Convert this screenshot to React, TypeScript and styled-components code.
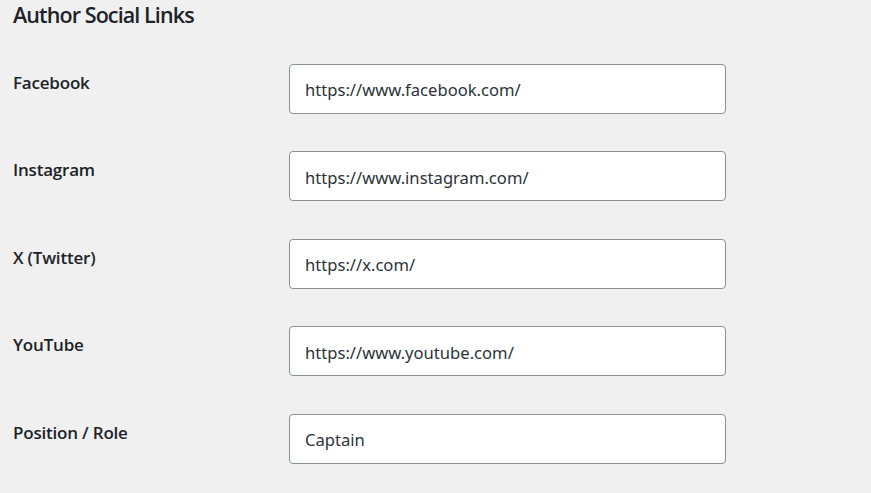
import React from "react";
import styled, { createGlobalStyle } from "styled-components";

const GlobalStyle = createGlobalStyle`
  html, body {
    margin: 0;
    padding: 0;
    background: #f0f0f1;
  }
  body {
    font-family: "Open Sans", "Noto Sans", sans-serif;
    color: #1d2327;
    font-size: 17.5px;
  }
`;

const Page = styled.div`
  padding: 0 13px;
`;

const Heading = styled.h2`
  margin: 0;
  padding-top: 1px;
  font-size: 21.5px;
  line-height: 1.3;
  font-weight: 600;
  letter-spacing: -0.9px;
  color: #1d2327;
`;

const FormTable = styled.div`
  display: flex;
  flex-direction: column;
  margin-top: 16px;
`;

const Row = styled.div`
  display: flex;
  align-items: flex-start;
`;

const Label = styled.label`
  width: 251px;
  padding: 27px 12.5px 24px 0;
  font-size: 17px;
  line-height: 1.3;
  font-weight: 600;
  letter-spacing: -0.2px;
  color: #1d2327;
`;

const Cell = styled.div`
  padding: 18.75px 12.5px;
`;

const Input = styled.input`
  box-sizing: border-box;
  width: 437px;
  height: 50px;
  padding: 2px 15px 0;
  border: 1px solid #8c8f94;
  border-radius: 4px;
  background: #fff;
  font-family: "Noto Sans", "Open Sans", sans-serif;
  font-size: 16.6px;
  color: #2c3338;
  outline: none;
`;

const fields = [
  { label: "Facebook", value: "https://www.facebook.com/" },
  { label: "Instagram", value: "https://www.instagram.com/" },
  { label: "X (Twitter)", value: "https://x.com/" },
  { label: "YouTube", value: "https://www.youtube.com/" },
  { label: "Position / Role", value: "Captain" },
];

export default function App() {
  return (
    <Page>
      <GlobalStyle />
      <Heading>Author Social Links</Heading>
      <FormTable>
        {fields.map((f) => (
          <Row key={f.label}>
            <Label>{f.label}</Label>
            <Cell>
              <Input type="text" defaultValue={f.value} readOnly />
            </Cell>
          </Row>
        ))}
      </FormTable>
    </Page>
  );
}
